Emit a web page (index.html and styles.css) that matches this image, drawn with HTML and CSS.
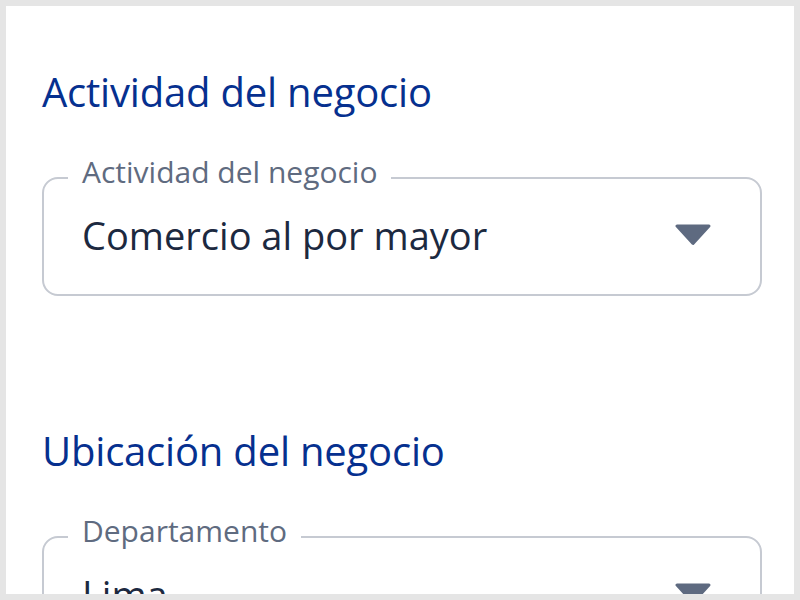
FILE: index.html
```html
<!DOCTYPE html>
<html lang="es">
<head>
<meta charset="utf-8">
<title>Actividad del negocio</title>
<link rel="stylesheet" href="styles.css">
</head>
<body>
<main class="screen">
  <section class="section">
    <h2 class="section-title">Actividad del negocio</h2>
    <fieldset class="select-field">
      <legend class="select-label">Actividad del negocio</legend>
      <div class="select-row">
        <span class="select-value">Comercio al por mayor</span>
        <svg class="select-arrow" width="36" height="22" viewBox="0 0 36 22" aria-hidden="true"><polygon points="2,2 34,2 18,19.5" fill="#5e6a80" stroke="#5e6a80" stroke-width="3" stroke-linejoin="round"/></svg>
      </div>
    </fieldset>
  </section>
  <section class="section">
    <h2 class="section-title">Ubicación del negocio</h2>
    <fieldset class="select-field">
      <legend class="select-label">Departamento</legend>
      <div class="select-row">
        <span class="select-value">Lima</span>
        <svg class="select-arrow" width="36" height="22" viewBox="0 0 36 22" aria-hidden="true"><polygon points="2,2 34,2 18,19.5" fill="#5e6a80" stroke="#5e6a80" stroke-width="3" stroke-linejoin="round"/></svg>
      </div>
    </fieldset>
  </section>
</main>
</body>
</html>
```

FILE: styles.css
```css
html, body {
  margin: 0;
  padding: 0;
  background: #e5e5e5;
}

body {
  font-family: "Open Sans", "Noto Sans", sans-serif;
  padding: 6px;
  height: 600px;
  box-sizing: border-box;
}

.screen {
  background: #ffffff;
  height: 588px;
  overflow: hidden;
  box-sizing: border-box;
  padding: 62px 32px 0 36px;
  display: flex;
  flex-direction: column;
  gap: 131px;
}

.section {
  display: flex;
  flex-direction: column;
  gap: 41px;
}

.section-title {
  margin: 0;
  font-size: 40px;
  line-height: 48px;
  font-weight: 500;
  color: #06308f;
  letter-spacing: -0.2px;
}

.select-field {
  margin: 0;
  padding: 0 24px;
  border: 2px solid #c6cad2;
  border-radius: 16px;
  min-width: 0;
}

.select-label {
  padding: 0 14px 11px;
  font-size: 30px;
  line-height: 30px;
  color: #5f6b80;
}

.select-row {
  display: flex;
  align-items: center;
  justify-content: space-between;
  padding: 15px 25px 37px 14px;
}

.select-value {
  font-size: 38px;
  line-height: 44px;
  font-weight: 500;
  color: #1c2940;
}

.select-arrow {
  display: block;
  flex: none;
}
```
